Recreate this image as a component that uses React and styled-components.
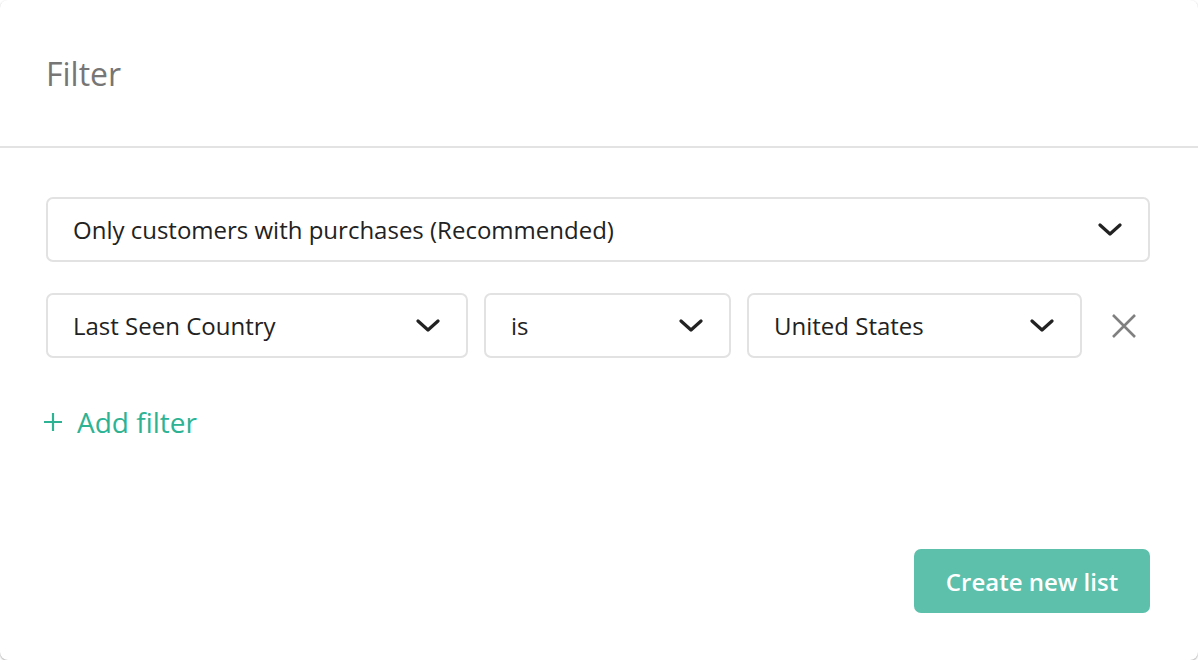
import React from "react";
import styled, { createGlobalStyle } from "styled-components";

const Global = createGlobalStyle`
  html, body { margin: 0; padding: 0; background: #ffffff; }
  body { font-family: "Open Sans", "Noto Sans", sans-serif; }
  * { box-sizing: border-box; }
`;

const Modal = styled.div`
  width: 1198px;
  height: 660px;
  background: #fff;
  border-radius: 8px;
  box-shadow: 0 1px 2px rgba(0, 0, 0, 0.35);
  display: flex;
  flex-direction: column;
`;

const Header = styled.div`
  height: 148px;
  border-bottom: 2px solid #e3e3e3;
  display: flex;
  align-items: center;
  padding: 0 46px;
`;

const Title = styled.h2`
  margin: 0;
  font-size: 32px;
  font-weight: 400;
  color: #767676;
`;

const Body = styled.div`
  flex: 1;
  padding: 49px 48px 47px 46px;
  display: flex;
  flex-direction: column;
`;

const Select = styled.div`
  height: 65px;
  border: 2px solid #e2e2e2;
  border-radius: 7px;
  display: flex;
  align-items: center;
  justify-content: space-between;
  padding: 0 26px 0 25px;
  font-size: 24px;
  color: #222;
`;

const Row = styled.div`
  margin-top: 31px;
  display: grid;
  grid-template-columns: 422px 247px 335px 1fr;
  gap: 16px;
  align-items: center;
`;

const RemoveBtn = styled.button`
  border: none;
  background: none;
  padding: 0;
  justify-self: center;
  display: flex;
  cursor: pointer;
`;

const AddFilter = styled.button`
  margin-top: 45px;
  margin-left: -3px;
  align-self: flex-start;
  border: none;
  background: none;
  padding: 0;
  display: flex;
  align-items: center;
  gap: 14px;
  font-family: inherit;
  font-size: 28px;
  color: #2db393;
  cursor: pointer;
`;

const Footer = styled.div`
  margin-top: auto;
  display: flex;
  justify-content: flex-end;
`;

const Primary = styled.button`
  width: 236px;
  height: 64px;
  border: none;
  border-radius: 7px;
  background: #5cc0ab;
  color: #fff;
  font-family: inherit;
  font-size: 24px;
  font-weight: 600;
  cursor: pointer;
`;

const Chevron = () => (
  <svg width="24" height="14" viewBox="0 0 24 14">
    <polyline points="2,2 12,11 22,2" fill="none" stroke="#222" strokeWidth="3.2" strokeLinecap="round" strokeLinejoin="round" />
  </svg>
);

const Dropdown = ({ children }) => (
  <Select>
    <span>{children}</span>
    <Chevron />
  </Select>
);

export default function App() {
  return (
    <>
      <Global />
      <Modal>
        <Header>
          <Title>Filter</Title>
        </Header>
        <Body>
          <Dropdown>Only customers with purchases (Recommended)</Dropdown>
          <Row>
            <Dropdown>Last Seen Country</Dropdown>
            <Dropdown>is</Dropdown>
            <Dropdown>United States</Dropdown>
            <RemoveBtn aria-label="Remove">
              <svg width="26" height="26" viewBox="0 0 26 26">
                <path d="M2 2 L24 24 M24 2 L2 24" stroke="#808080" strokeWidth="2.6" />
              </svg>
            </RemoveBtn>
          </Row>
          <AddFilter>
            <svg width="20" height="20" viewBox="0 0 20 20">
              <path d="M10 1 V19 M1 10 H19" stroke="#2db393" strokeWidth="2.2" />
            </svg>
            <span>Add filter</span>
          </AddFilter>
          <Footer>
            <Primary>Create new list</Primary>
          </Footer>
        </Body>
      </Modal>
    </>
  );
}
